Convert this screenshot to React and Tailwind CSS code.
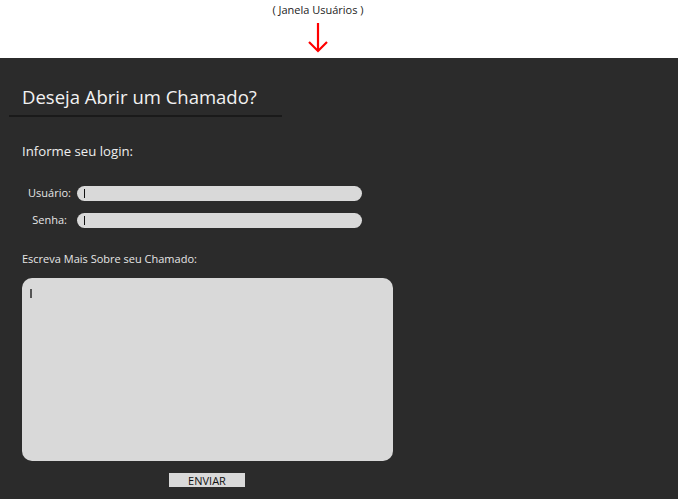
export default function App() {
  return (
    <div className="w-[678px] h-[499px] flex flex-col bg-white overflow-hidden" style={{ fontFamily: '"Open Sans", sans-serif' }}>
      {/* Header label */}
      <div className="h-[58px] w-[636px] flex flex-col items-center">
        <span className="text-[11px] leading-none text-[#222] mt-[4px]">( Janela Usuários )</span>
        <svg width="22" height="32" viewBox="0 0 22 32" className="mt-[7px]">
          <path d="M11 1 V29" stroke="#ff0000" strokeWidth="2.2" fill="none" />
          <path d="M2 20 L11 29 L20 20" stroke="#ff0000" strokeWidth="2.2" fill="none" />
        </svg>
      </div>

      {/* Panel */}
      <div className="flex-1 bg-[#2b2b2b] flex flex-col">
        <div className="mt-[26px] ml-[9px] w-[273px] border-b-2 border-[#1a1a1a] pl-[13px] pb-[5px]">
          <h1 className="text-[18.5px] leading-[26px] text-[#f2f2f2]">Deseja Abrir um Chamado?</h1>
        </div>

        <p className="mt-[25px] ml-[22px] text-[13.2px] leading-[18px] text-[#eeeeee]">Informe seu login:</p>

        <div className="mt-[26px] flex flex-col gap-[12px]">
          <div className="flex items-center h-[15px]">
            <span className="w-[72px] text-right pr-[1px] text-[11px] text-[#e6e6e6]">Usuário:</span>
            <div className="ml-[5px] w-[285px] h-[15px] rounded-full bg-[#d9d9d9] flex items-center pl-[7px]">
              <span className="w-[1px] h-[9px] bg-[#111]" />
            </div>
          </div>
          <div className="flex items-center h-[15px]">
            <span className="w-[68px] text-right pr-[1px] text-[11px] text-[#e6e6e6]">Senha:</span>
            <div className="ml-[9px] w-[285px] h-[15px] rounded-full bg-[#d9d9d9] flex items-center pl-[7px]">
              <span className="w-[1px] h-[9px] bg-[#111]" />
            </div>
          </div>
        </div>

        <p className="mt-[24px] ml-[22px] text-[11px] leading-[14px] text-[#e6e6e6]">Escreva Mais Sobre seu Chamado:</p>

        <div className="mt-[12px] ml-[22px] w-[371px] h-[183px] rounded-[10px] bg-[#d9d9d9] pl-[8px] pt-[11px]">
          <span className="block w-[1.5px] h-[9px] bg-[#555]" />
        </div>

        <div className="mt-[12px] ml-[169px] w-[76px] h-[14px] bg-[#d9d9d9] flex items-center justify-center text-[11px] leading-none text-[#111]">
          ENVIAR
        </div>
      </div>
    </div>
  );
}
